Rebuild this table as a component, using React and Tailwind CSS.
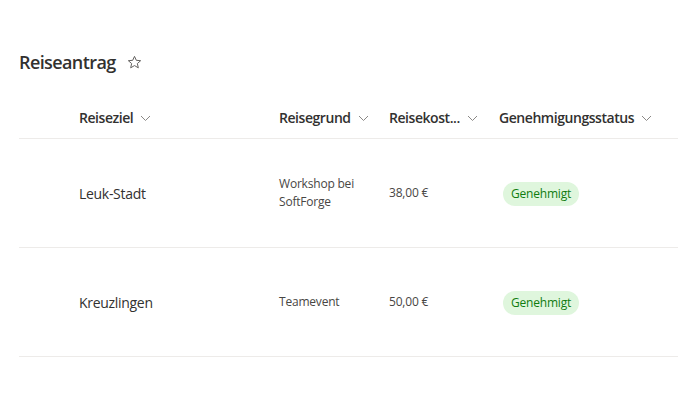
import React from "react";

const rows = [
  { ziel: "Leuk-Stadt", grund: "Workshop bei\nSoftForge", kosten: "38,00 €", status: "Genehmigt" },
  { ziel: "Kreuzlingen", grund: "Teamevent", kosten: "50,00 €", status: "Genehmigt" },
];

const Chevron = () => (
  <svg width="11" height="10" viewBox="0 0 11 10" className="ml-[7px] text-[#8a8886]">
    <path d="M1 3 L5.5 7.5 L10 3" fill="none" stroke="currentColor" strokeWidth="1" />
  </svg>
);

const Star = () => (
  <svg width="15" height="15" viewBox="0 0 20 20" className="text-[#605e5c]">
    <path
      d="M10 1.8 L12.4 7.1 L18.2 7.6 L13.8 11.4 L15.1 17.1 L10 14.1 L4.9 17.1 L6.2 11.4 L1.8 7.6 L7.6 7.1 Z"
      fill="none"
      stroke="currentColor"
      strokeWidth="1.3"
      strokeLinejoin="round"
    />
  </svg>
);

const cols = "grid grid-cols-[60px_200px_110px_110px_1fr] items-center";

export default function App() {
  return (
    <div className="w-[678px] h-[395px] bg-white pl-[19px] pt-[49px] font-['Open_Sans','Noto_Sans',sans-serif] text-[#323130] overflow-hidden">
      {/* Title */}
      <div className="flex items-center h-[26px]">
        <h1 className="text-[18px] font-semibold tracking-[-0.6px]">Reiseantrag</h1>
        <span className="ml-[11px] flex items-center">
          <Star />
        </span>
      </div>

      {/* Header */}
      <div className={`${cols} h-[53px] mt-[11px] pt-[11px] border-b border-[#edebe9] text-[14px] font-semibold tracking-[-0.45px]`}>
        <div />
        <div className="flex items-center">Reiseziel<Chevron /></div>
        <div className="flex items-center">Reisegrund<Chevron /></div>
        <div className="flex items-center">Reisekost...<Chevron /></div>
        <div className="flex items-center">Genehmigungsstatus<Chevron /></div>
      </div>

      {/* Rows */}
      {rows.map((r, i) => (
        <div key={i} className={`${cols} h-[109px] border-b border-[#edebe9]`}>
          <div />
          <div className="text-[14px] tracking-[-0.3px]">{r.ziel}</div>
          <div className="text-[12px] leading-[18px] text-[#484644] whitespace-pre-line tracking-[-0.2px]">{r.grund}</div>
          <div className="text-[12px] text-[#484644] tracking-[-0.2px]">{r.kosten}</div>
          <div>
            <span className="ml-[4px] inline-flex items-center h-[24px] px-[8px] rounded-full bg-[#dff6dd] text-[#107c10] text-[12px] tracking-[-0.2px]">
              {r.status}
            </span>
          </div>
        </div>
      ))}
    </div>
  );
}
